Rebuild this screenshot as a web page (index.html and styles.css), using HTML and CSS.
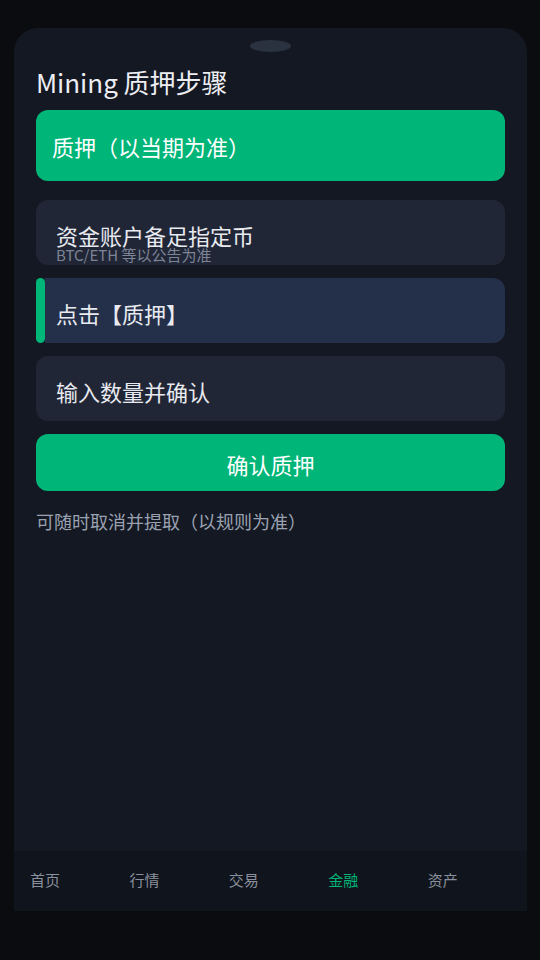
FILE: index.html
```html
<!DOCTYPE html>
<html lang="zh-CN">
<head>
<meta charset="utf-8">
<title>Mining 质押步骤</title>
<link rel="stylesheet" href="styles.css">
</head>
<body>
<div class="sheet">
  <main class="content">
    <div class="handle"></div>
    <h1 class="title">Mining 质押步骤</h1>
    <div class="hero">质押（以当期为准）</div>
    <div class="steps">
      <div class="step">
        <div class="step-title">资金账户备足指定币</div>
        <div class="step-sub">BTC/ETH 等以公告为准</div>
      </div>
      <div class="step-row">
        <div class="step-bar"></div>
        <div class="step step-active">
          <div class="step-title">点击【质押】</div>
        </div>
      </div>
      <div class="step">
        <div class="step-title">输入数量并确认</div>
      </div>
      <div class="confirm">确认质押</div>
    </div>
    <p class="note">可随时取消并提取（以规则为准）</p>
  </main>
  <nav class="tabbar">
    <span class="tab">首页</span>
    <span class="tab">行情</span>
    <span class="tab">交易</span>
    <span class="tab tab-active">金融</span>
    <span class="tab">资产</span>
  </nav>
</div>
</body>
</html>
```

FILE: styles.css
```css
* { box-sizing: border-box; }
html, body {
  margin: 0;
  padding: 0;
  background: #0b0c10;
  font-family: "Noto Sans CJK SC", "Noto Sans", sans-serif;
}
body { width: 540px; height: 960px; overflow: hidden; }

.sheet {
  margin: 28px 0 0 14px;
  width: 513px;
  height: 883px;
  background: #141822;
  border-radius: 24px 24px 0 0;
  display: flex;
  flex-direction: column;
}

.content {
  flex: 1;
  padding: 12px 22px 0 22px;
  display: flex;
  flex-direction: column;
}

.handle {
  align-self: center;
  width: 41px;
  height: 12px;
  border-radius: 50%;
  background: #2a3240;
}

.title {
  margin: 13px 0 3px 0;
  font-size: 26px;
  line-height: 34px;
  font-weight: 400;
  color: #eceef3;
}

.hero {
  margin-top: 8px;
  height: 71px;
  padding: 22px 16px 0 16px;
  background: #00b578;
  border-radius: 12px;
  font-size: 22px;
  line-height: 28px;
  color: #ffffff;
}

.steps {
  margin-top: 19px;
  display: flex;
  flex-direction: column;
  gap: 13px;
}

.step {
  height: 65px;
  padding: 22px 20px 0 20px;
  background: #212636;
  border-radius: 12px;
}

.step-title {
  font-size: 22px;
  line-height: 26px;
  color: #e8eaf0;
}

.step-sub {
  font-size: 15px;
  line-height: 14px;
  color: #7c8496;
}

.step-row {
  display: flex;
  height: 65px;
}

.step-bar {
  width: 9px;
  background: #00b578;
  border-radius: 5px;
}

.step-active {
  flex: 1;
  padding-left: 11px;
  background: #243049;
  border-radius: 0 12px 12px 0;
}

.confirm {
  height: 57px;
  padding-top: 16px;
  background: #00b578;
  border-radius: 12px;
  text-align: center;
  font-size: 22px;
  line-height: 29px;
  color: #ffffff;
}

.note {
  margin: 18px 0 0 0;
  font-size: 18px;
  line-height: 24px;
  color: #9aa1b1;
}

.tabbar {
  height: 60px;
  background: #10141c;
  display: flex;
  padding-left: 16px;
}

.tab {
  width: 100px;
  font-size: 15px;
  line-height: 58px;
  color: #8a909d;
}

.tab-active { color: #00b578; }
```
